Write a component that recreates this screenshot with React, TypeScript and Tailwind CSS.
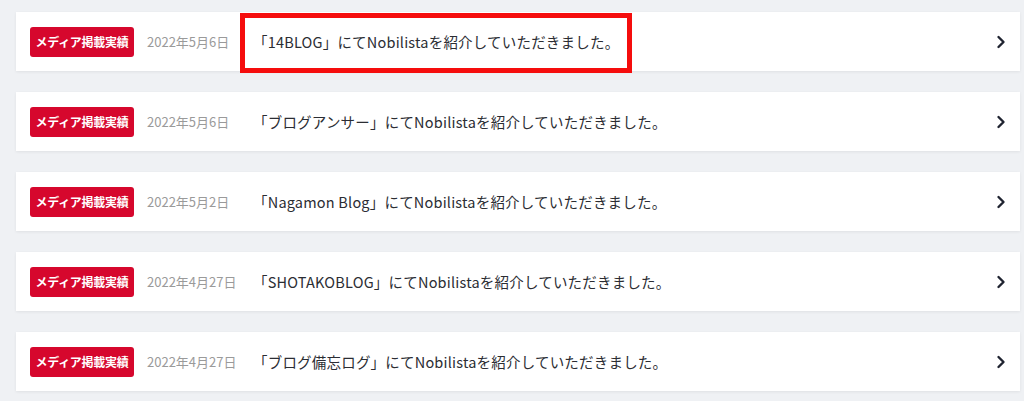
import React from "react";

const items = [
  { date: "2022年5月6日", title: "「14BLOG」にてNobilistaを紹介していただきました。" },
  { date: "2022年5月6日", title: "「ブログアンサー」にてNobilistaを紹介していただきました。" },
  { date: "2022年5月2日", title: "「Nagamon Blog」にてNobilistaを紹介していただきました。" },
  { date: "2022年4月27日", title: "「SHOTAKOBLOG」にてNobilistaを紹介していただきました。" },
  { date: "2022年4月27日", title: "「ブログ備忘ログ」にてNobilistaを紹介していただきました。" },
];

function Chevron() {
  return (
    <svg width="10" height="14" viewBox="0 0 10 14" fill="none">
      <path d="M2.5 2 L7.5 7 L2.5 12" stroke="#1f2330" strokeWidth="2.4" strokeLinecap="round" strokeLinejoin="round" />
    </svg>
  );
}

export default function App() {
  return (
    <div
      className="relative w-[1024px] h-[401px] overflow-hidden bg-[#eff1f4] pt-[12px] pl-[16px] pr-[4px]"
      style={{ fontFamily: '"Noto Sans CJK JP", "Noto Sans", sans-serif' }}
    >
      <div className="flex flex-col gap-[21px]">
        {items.map((it, i) => (
          <div
            key={i}
            className="h-[59px] bg-white flex items-center pl-[14px] pr-[14px] shadow-[0_1px_3px_rgba(0,0,0,0.07)]"
          >
            <div className="w-[104px] h-[30px] rounded-[3px] bg-[#d6072d] text-white text-[12px] font-bold flex items-center justify-center tracking-[-0.3px]">
              メディア掲載実績
            </div>
            <div className="w-[119px] pl-[13px] text-[13px] text-[#9a9a9a] whitespace-nowrap">{it.date}</div>
            <div className="flex-1 text-[14.5px] font-normal tracking-[0.2px] text-[#2b2d33] whitespace-nowrap">{it.title}</div>
            <Chevron />
          </div>
        ))}
      </div>
      <div className="absolute left-[240px] top-[13px] w-[392px] h-[60px] border-[5px] border-[#f50d0d]" />
    </div>
  );
}
